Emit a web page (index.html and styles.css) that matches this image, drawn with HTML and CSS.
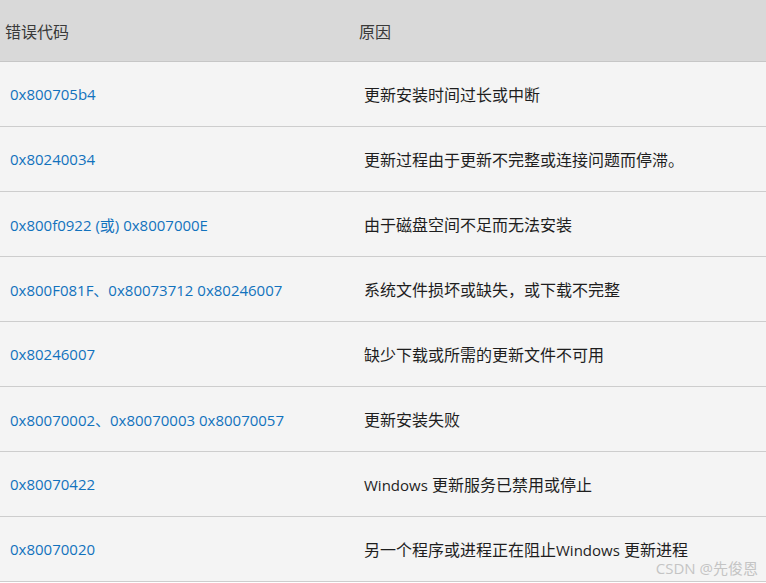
FILE: index.html
```html
<!DOCTYPE html>
<html lang="zh-CN">
<head>
<meta charset="utf-8">
<title>错误代码</title>
<link rel="stylesheet" href="styles.css">
</head>
<body>
<div class="wrap">
<table class="codes">
  <thead>
    <tr><th class="c1">错误代码</th><th class="c2">原因</th></tr>
  </thead>
  <tbody>
    <tr><td class="code">0x800705b4</td><td class="why">更新安装时间过长或中断</td></tr>
    <tr><td class="code">0x80240034</td><td class="why">更新过程由于更新不完整或连接问题而停滞。</td></tr>
    <tr><td class="code">0x800f0922 (或) 0x8007000E</td><td class="why">由于磁盘空间不足而无法安装</td></tr>
    <tr><td class="code">0x800F081F、0x80073712 0x80246007</td><td class="why">系统文件损坏或缺失，或下载不完整</td></tr>
    <tr><td class="code">0x80246007</td><td class="why">缺少下载或所需的更新文件不可用</td></tr>
    <tr><td class="code">0x80070002、0x80070003 0x80070057</td><td class="why">更新安装失败</td></tr>
    <tr><td class="code">0x80070422</td><td class="why"><span class="lat">Windows</span> 更新服务已禁用或停止</td></tr>
    <tr><td class="code">0x80070020</td><td class="why">另一个程序或进程正在阻止<span class="lat">Windows</span> 更新进程</td></tr>
  </tbody>
</table>
<div class="mark">CSDN @先俊恩</div>
</div>
</body>
</html>
```

FILE: styles.css
```css
html, body {
  margin: 0;
  padding: 0;
  background: #ffffff;
}
.wrap {
  position: relative;
  width: 766px;
  height: 583px;
  overflow: hidden;
}
.codes {
  width: 766px;
  border-collapse: collapse;
  table-layout: fixed;
  font-family: "Open Sans", "Noto Sans CJK SC", sans-serif;
}
.codes th {
  background: #d9d9d9;
  height: 61px;
  padding: 0 0 0 5px;
  text-align: left;
  font-weight: normal;
  font-size: 16px;
  color: #3a3a3a;
  border-bottom: 1px solid #c6c6c6;
  vertical-align: middle;
}
.codes th.c1 {
  width: 349px;
}
.codes td {
  background: #f4f4f4;
  height: 64px;
  padding: 0 0 0 10px;
  border-bottom: 1px solid #cdcdcd;
  vertical-align: middle;
  white-space: nowrap;
}
.code {
  font-size: 15px;
  color: #1272bd;
}
.why {
  font-size: 16px;
  color: #1e1e1e;
}
.lat {
  font-size: 15px;
}
.mark {
  position: absolute;
  right: 8px;
  bottom: 5px;
  font-family: "Open Sans", "Noto Sans CJK SC", sans-serif;
  font-size: 15px;
  color: #c4c4c4;
}
```
